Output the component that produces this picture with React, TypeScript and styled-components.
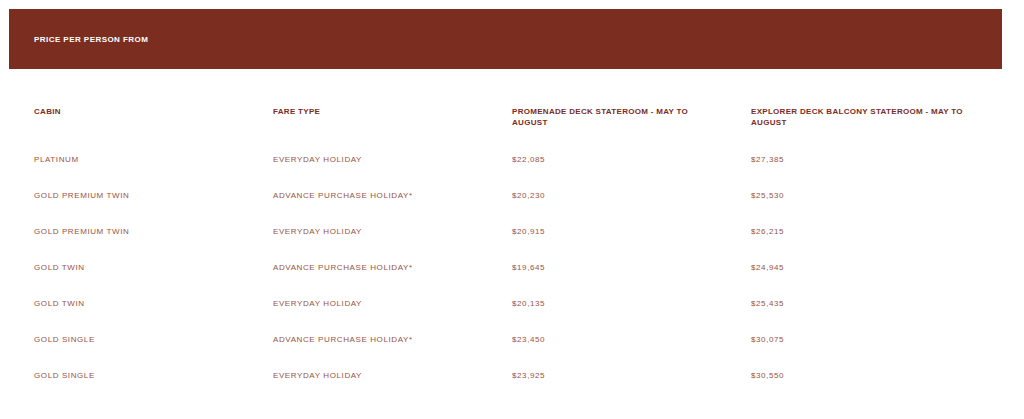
import React from 'react';
import styled, { createGlobalStyle } from 'styled-components';

type FareRow = {
    cabin: string;
    fare: string;
    promenade: string;
    explorer: string;
};

const rows: FareRow[] = [
    { cabin: 'Platinum', fare: 'Everyday Holiday', promenade: '$22,085', explorer: '$27,385' },
    { cabin: 'Gold Premium Twin', fare: 'Advance Purchase Holiday*', promenade: '$20,230', explorer: '$25,530' },
    { cabin: 'Gold Premium Twin', fare: 'Everyday Holiday', promenade: '$20,915', explorer: '$26,215' },
    { cabin: 'Gold Twin', fare: 'Advance Purchase Holiday*', promenade: '$19,645', explorer: '$24,945' },
    { cabin: 'Gold Twin', fare: 'Everyday Holiday', promenade: '$20,135', explorer: '$25,435' },
    { cabin: 'Gold Single', fare: 'Advance Purchase Holiday*', promenade: '$23,450', explorer: '$30,075' },
    { cabin: 'Gold Single', fare: 'Everyday Holiday', promenade: '$23,925', explorer: '$30,550' },
];

const GlobalStyle = createGlobalStyle`
    body {
        margin: 0;
        background: #fff;
        font-family: "Liberation Sans", Arial, sans-serif;
    }
`;

const Page = styled.div`
    padding: 9px 22px 0 9px;
`;

const Banner = styled.div`
    height: 60px;
    background: #7b2d1f;
    display: flex;
    align-items: center;
    padding-left: 25px;
    color: #fff;
    font-size: 8px;
    font-weight: 700;
    letter-spacing: 0.45px;
    text-transform: uppercase;
`;

const Table = styled.div`
    display: grid;
    grid-template-columns: repeat(4, 239px);
    padding: 25px 0 0 25px;
`;

const Cell = styled.div<{ $head?: boolean }>`
    padding: ${p => (p.$head ? '12px 27px 13px 0' : '12.5px 10px 12.5px 0')};
    font-size: 8px;
    line-height: 11px;
    letter-spacing: ${p => (p.$head ? '0.3px' : '0.6px')};
    font-weight: ${p => (p.$head ? 700 : 400)};
    color: ${p => (p.$head ? '#7b2d1f' : '#985343')};
    text-transform: uppercase;
`;

function App() {
    return (
        <Page>
            <GlobalStyle />
            <Banner>Price per person from</Banner>
            <Table>
                <Cell $head>Cabin</Cell>
                <Cell $head>Fare type</Cell>
                <Cell $head>Promenade Deck Stateroom - May to August</Cell>
                <Cell $head>Explorer Deck Balcony Stateroom - May to August</Cell>
                {rows.map((r, i) => (
                    <React.Fragment key={i}>
                        <Cell>{r.cabin}</Cell>
                        <Cell>{r.fare}</Cell>
                        <Cell>{r.promenade}</Cell>
                        <Cell>{r.explorer}</Cell>
                    </React.Fragment>
                ))}
            </Table>
        </Page>
    );
}

export default App;
